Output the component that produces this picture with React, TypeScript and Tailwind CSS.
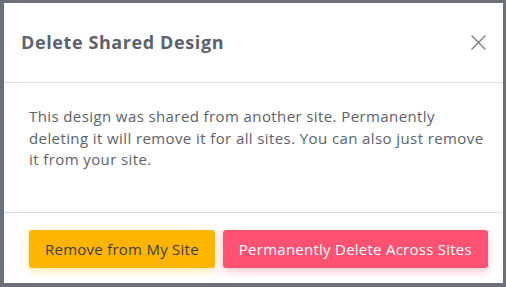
export default function App() {
  return (
    <div
      className="h-[287px] w-[506px] bg-[#6b7079] pl-[4px] pr-[3px] pt-[3px] pb-[4px]"
      style={{ fontFamily: '"Open Sans", "DejaVu Sans", sans-serif' }}
    >
      <div className="flex h-full w-full flex-col bg-white">
        {/* Header */}
        <div className="flex h-[80px] items-center justify-between border-b border-[#dedede] pl-[17px] pr-[17px]">
          <h2 className="text-[18px] font-bold tracking-[0.6px] text-[#5b626c]">Delete Shared Design</h2>
          <button className="text-[#7a7f87]">
            <svg width="15" height="15" viewBox="0 0 15 15" fill="none" stroke="currentColor" strokeWidth="1.4">
              <path d="M0.5 0.5L14.5 14.5M14.5 0.5L0.5 14.5" />
            </svg>
          </button>
        </div>

        {/* Body */}
        <div className="flex-1 border-b border-[#dedede] pl-[25px] pr-[12px] pt-[23px]">
          <p className="text-[15px] leading-[21.5px] tracking-[0.4px] text-[#5b626c]">
            This design was shared from another site. Permanently deleting it will remove it for all sites. You can also just remove it from your site.
          </p>
        </div>

        {/* Footer */}
        <div className="flex gap-[8px] px-[25px] pt-[17px] pb-[15px]">
          <button className="h-[38px] whitespace-nowrap rounded-[3px] bg-[#ffb400] px-[16px] text-[15px] tracking-[0.25px] text-[#3f3f3f] shadow-[0_3px_8px_rgba(255,180,0,0.35)]">
            Remove from My Site
          </button>
          <button className="h-[38px] whitespace-nowrap rounded-[3px] bg-[#ff5273] px-[16px] text-[15px] tracking-[0.25px] text-white shadow-[0_3px_8px_rgba(255,82,115,0.35)]">
            Permanently Delete Across Sites
          </button>
        </div>
      </div>
    </div>
  );
}
